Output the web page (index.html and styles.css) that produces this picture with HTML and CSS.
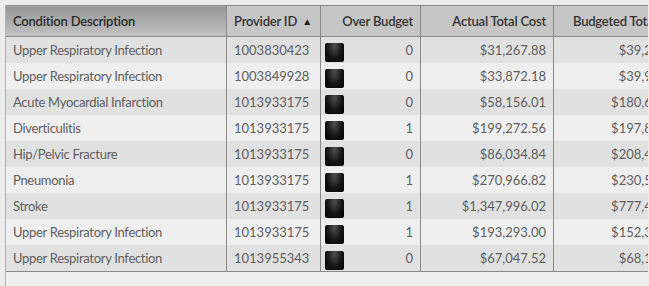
FILE: index.html
```html
<!DOCTYPE html>
<html>
<head>
<meta charset="utf-8">
<link rel="stylesheet" href="styles.css">
</head>
<body>
<div class="frame">
  <table class="grid">
    <colgroup>
      <col class="c1"><col class="c2"><col class="c3"><col class="c4"><col class="c5">
    </colgroup>
    <thead>
      <tr>
        <th class="hl hot">Condition Description</th>
        <th class="hl"><div class="hsort">Provider ID <span class="sort">▲</span></div></th>
        <th class="hr">Over Budget</th>
        <th class="hr">Actual Total Cost</th>
        <th class="hr">Budgeted Total Cost</th>
      </tr>
    </thead>
    <tbody>
      <tr><td class="name">Upper Respiratory Infection</td><td>1003830423</td><td class="ob"><div class="obin"><span class="sq"></span><span>0</span></div></td><td class="num">$31,267.88</td><td class="num">$39,210.00</td></tr>
      <tr><td class="name">Upper Respiratory Infection</td><td>1003849928</td><td class="ob"><div class="obin"><span class="sq"></span><span>0</span></div></td><td class="num">$33,872.18</td><td class="num">$39,910.00</td></tr>
      <tr><td class="name">Acute Myocardial Infarction</td><td>1013933175</td><td class="ob"><div class="obin"><span class="sq"></span><span>0</span></div></td><td class="num">$58,156.01</td><td class="num">$180,610.00</td></tr>
      <tr><td class="name">Diverticulitis</td><td>1013933175</td><td class="ob"><div class="obin"><span class="sq"></span><span>1</span></div></td><td class="num">$199,272.56</td><td class="num">$197,810.00</td></tr>
      <tr><td class="name">Hip/Pelvic Fracture</td><td>1013933175</td><td class="ob"><div class="obin"><span class="sq"></span><span>0</span></div></td><td class="num">$86,034.84</td><td class="num">$208,410.00</td></tr>
      <tr><td class="name">Pneumonia</td><td>1013933175</td><td class="ob"><div class="obin"><span class="sq"></span><span>1</span></div></td><td class="num">$270,966.82</td><td class="num">$230,510.00</td></tr>
      <tr><td class="name">Stroke</td><td>1013933175</td><td class="ob"><div class="obin"><span class="sq"></span><span>1</span></div></td><td class="num">$1,347,996.02</td><td class="num">$777,410.00</td></tr>
      <tr><td class="name">Upper Respiratory Infection</td><td>1013933175</td><td class="ob"><div class="obin"><span class="sq"></span><span>1</span></div></td><td class="num">$193,293.00</td><td class="num">$152,310.00</td></tr>
      <tr><td class="name">Upper Respiratory Infection</td><td>1013955343</td><td class="ob"><div class="obin"><span class="sq"></span><span>0</span></div></td><td class="num">$67,047.52</td><td class="num">$68,110.00</td></tr>
    </tbody>
  </table>
</div>
</body>
</html>
```

FILE: styles.css
```css
html, body {
  margin: 0;
  padding: 0;
  background: #ececec;
  overflow: hidden;
}
body {
  width: 649px;
  height: 286px;
  font-family: Lato, "Open Sans", sans-serif;
}
.frame {
  margin: 5px 0 0 5px;
  width: 642px;
  height: 281px;
  border-left: 1px solid #b0b0b0;
  background: #f0f0f0;
  overflow: hidden;
}
.grid {
  border-collapse: collapse;
  table-layout: fixed;
  width: 687px;
  margin-left: -1px;
}
.c1 { width: 221px; }
.c2 { width: 94px; }
.c3 { width: 100px; }
.c4 { width: 133px; }
.c5 { width: 139px; }
.grid th {
  height: 30px;
  padding: 0 7px;
  font-size: 13px;
  font-weight: 600;
  letter-spacing: -0.2px;
  color: #333;
  background: #c6c6c6;
  border: 1px solid #8a8a8a;
  white-space: nowrap;
  overflow: hidden;
}
.grid th.hot {
  background: linear-gradient(#969696, #c3c3c3);
  color: #2a2a2a;
}
.hl { text-align: left; }
.hr { text-align: right; }
.hsort {
  display: flex;
  justify-content: space-between;
  align-items: center;
}
.sort {
  font-size: 10px;
  color: #1a1a1a;
  margin-right: 1px;
}
.grid td {
  height: 26px;
  padding: 0 7px;
  font-size: 13px;
  color: #5e5e5e;
  border-left: 1px solid #8a8a8a;
  border-right: 1px solid #8a8a8a;
  white-space: nowrap;
  overflow: hidden;
  vertical-align: middle;
}
.grid td.name { letter-spacing: -0.3px; }
.grid tbody tr:nth-child(odd) td { background: #e1e1e1; }
.grid tbody tr:nth-child(even) td { background: #efefef; }
.grid tbody tr:last-child td { border-bottom: 1px solid #8a8a8a; }
.grid td.num { text-align: right; }
.grid td.ob { padding-left: 4px; }
.obin {
  display: flex;
  justify-content: space-between;
  align-items: center;
}
.sq {
  width: 19px;
  height: 19px;
  margin-top: 5px;
  border-radius: 2px;
  background: radial-gradient(ellipse at 50% 12%, #505050 0%, #151515 55%, #000 100%);
}
```
